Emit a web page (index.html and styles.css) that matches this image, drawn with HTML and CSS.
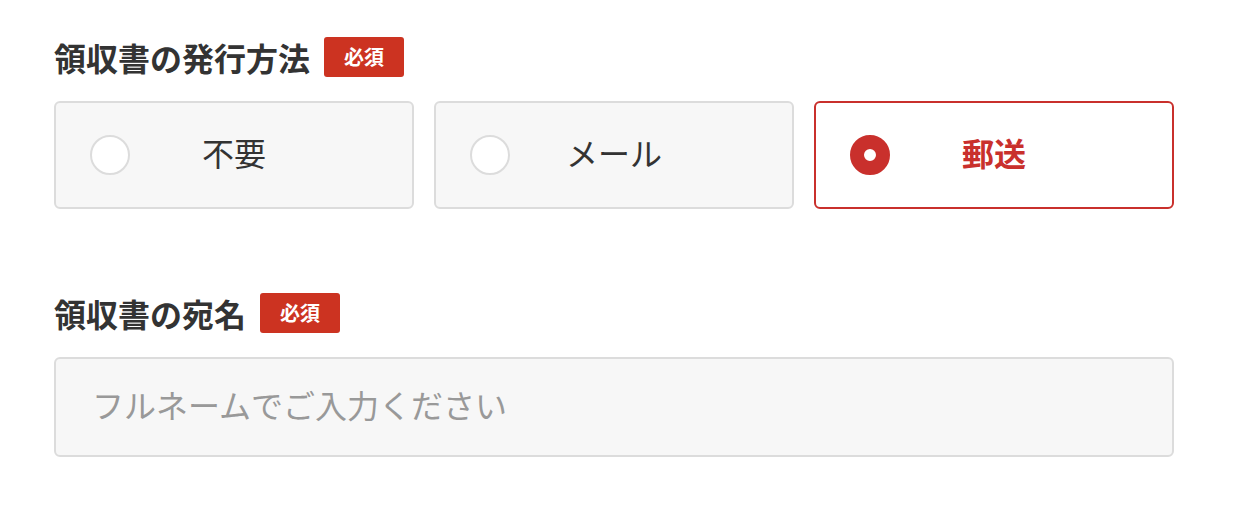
FILE: index.html
```html
<!DOCTYPE html>
<html lang="ja">
<head>
<meta charset="utf-8">
<link rel="stylesheet" href="styles.css">
</head>
<body>
<div class="form">
  <section class="field">
    <div class="label-row">
      <h2 class="label">領収書の発行方法</h2>
      <span class="badge">必須</span>
    </div>
    <div class="options">
      <label class="option">
        <span class="radio"></span>
        <span class="option-text">不要</span>
      </label>
      <label class="option">
        <span class="radio"></span>
        <span class="option-text">メール</span>
      </label>
      <label class="option selected">
        <span class="radio"></span>
        <span class="option-text">郵送</span>
      </label>
    </div>
  </section>
  <section class="field second">
    <div class="label-row">
      <h2 class="label">領収書の宛名</h2>
      <span class="badge">必須</span>
    </div>
    <div class="input">フルネームでご入力ください</div>
  </section>
</div>
</body>
</html>
```
FILE: styles.css
```css
* { box-sizing: border-box; }
html, body { margin: 0; padding: 0; background: #fff; }
body {
  font-family: "Noto Sans CJK JP", "Noto Sans", sans-serif;
  color: #333;
}
.form {
  width: 1120px;
  margin-left: 54px;
  padding-top: 37px;
}
.field.second { margin-top: 84px; }
.label-row {
  display: flex;
  align-items: center;
  gap: 14px;
  height: 40px;
  margin-bottom: 24px;
}
.label {
  margin: 0;
  font-size: 32px;
  font-weight: 700;
  line-height: 40px;
  color: #333;
}
.badge {
  display: inline-flex;
  align-items: center;
  justify-content: center;
  width: 80px;
  height: 40px;
  background: #cc3321;
  color: #fff;
  border-radius: 3px;
  font-size: 20px;
  font-weight: 700;
  line-height: 1;
}
.options {
  display: grid;
  grid-template-columns: repeat(3, 1fr);
  gap: 20px;
}
.option {
  position: relative;
  display: flex;
  align-items: center;
  justify-content: center;
  height: 108px;
  border: 2px solid #dcdcdc;
  border-radius: 6px;
  background: #f7f7f7;
}
.radio {
  position: absolute;
  left: 34px;
  top: 50%;
  width: 40px;
  height: 40px;
  margin-top: -20px;
  border-radius: 50%;
  background: #fff;
  border: 2px solid #dcdcdc;
}
.option-text {
  font-size: 32px;
  line-height: 1;
  padding-bottom: 6px;
  color: #333;
}
.option.selected {
  border-color: #c9302c;
  background: #fff;
}
.option.selected .radio {
  border: 14px solid #c9302c;
}
.option.selected .option-text {
  color: #c9302c;
  font-weight: 700;
}
.input {
  height: 100px;
  border: 2px solid #dcdcdc;
  border-radius: 6px;
  background: #f7f7f7;
  display: flex;
  align-items: center;
  padding-left: 36px;
  padding-bottom: 6px;
  font-size: 32px;
  line-height: 1;
  color: #999;
}
```
